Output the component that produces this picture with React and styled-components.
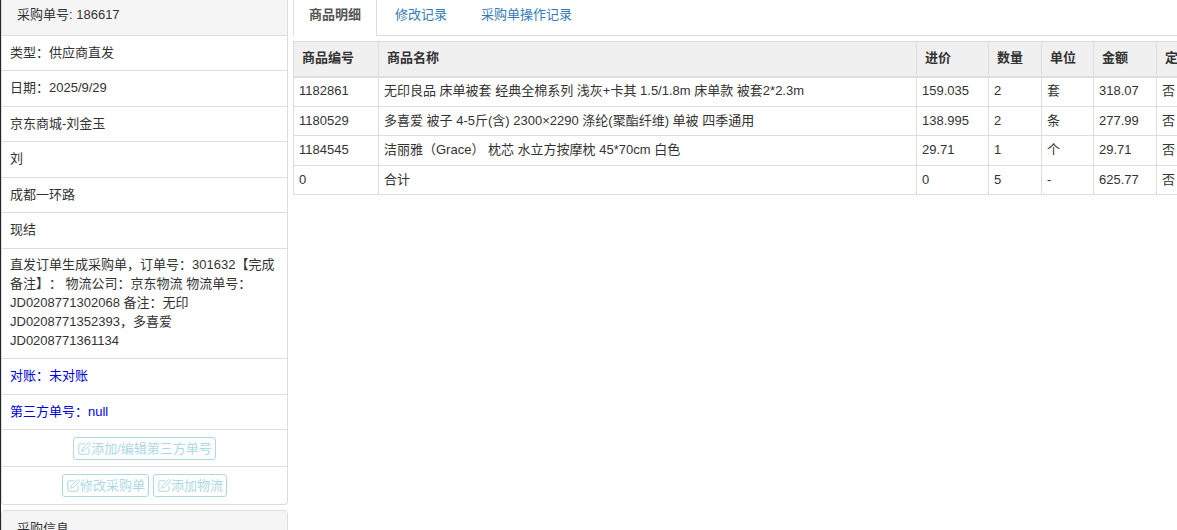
import React from 'react';
import styled, { createGlobalStyle } from 'styled-components';

const GlobalStyle = createGlobalStyle`
    * {
        box-sizing: border-box;
    }

    body {
        margin: 0;
        background: #fff;
        color: #333;
        font-family: "Liberation Sans", "Noto Sans CJK SC", sans-serif;
        font-size: 13px;
        line-height: 19px;
        text-spacing-trim: space-all;
        overflow: hidden;
    }
`;

const Page = styled.div`
    display: flex;
    align-items: stretch;
    min-height: 100vh;
    border-left: 1px solid #23262e;
`;

const Sidebar = styled.aside`
    flex: 0 0 287px;
    height: 100vh;
    overflow: hidden;
`;

const Panel = styled.section`
    margin-bottom: 5px;
    border: 1px solid #ddd;
    border-top-width: ${props => props.$cut ? '0' : '1px'};
    border-radius: ${props => props.$cut ? '0 0 4px 4px' : '4px'};
    overflow: hidden;
`;

const PanelHeading = styled.h3`
    margin: 0;
    padding: ${props => props.$cut ? '5px 15px 11px' : '8px 15px'};
    background: #f5f5f5;
    font-size: 13px;
    font-weight: normal;
`;

const List = styled.ul`
    margin: 0;
    padding: 0;
    list-style: none;
`;

const Item = styled.li`
    padding: 7px 8px 8px;
    border-top: 1px solid #ddd;
    color: ${props => props.$blue ? '#0000dc' : 'inherit'};

    &:nth-child(even) {
        padding-bottom: 9px;
    }
`;

const NoteItem = styled(Item)`
    padding: 6px 8px 8px;
`;

const ButtonItem = styled.li`
    display: flex;
    justify-content: center;
    gap: 4px;
    padding: 7px 8px 6px;
    border-top: 1px solid #ddd;

    &:last-child {
        padding-bottom: 7px;
    }
`;

const EditButton = styled.button`
    display: flex;
    align-items: center;
    height: 23px;
    padding: 0 3px 0 4px;
    border: 1px solid #add8e6;
    border-radius: 3px;
    background: #fff;
    color: #add8e6;
    font: inherit;
    cursor: pointer;
`;

const Main = styled.main`
    flex: 1;
    min-width: 0;
    padding-left: 5px;
    overflow: hidden;
`;

const Tabs = styled.nav`
    display: flex;
    gap: 2px;
    margin-bottom: 5px;
    border-bottom: 1px solid #ddd;
`;

const Tab = styled.a`
    margin-bottom: -1px;
    padding: 5px 15px 12px;
    border: solid ${props => props.$active ? '#ddd' : 'transparent'};
    border-width: 0 1px;
    background: ${props => props.$active ? '#fff' : 'transparent'};
    color: ${props => props.$active ? '#555' : '#337ab7'};
    font-weight: ${props => props.$active ? 'bold' : 'normal'};
    text-decoration: none;
`;

// runs a little past the right edge, the last column is cut by the window
const Table = styled.table`
    width: calc(100% + 9px);
    table-layout: fixed;
    border-collapse: collapse;
    white-space: nowrap;
`;

const Th = styled.th`
    width: ${props => props.$width || 'auto'};
    height: 35px;
    padding: 0 8px 2px;
    border: 1px solid #ddd;
    border-bottom-width: 2px;
    background: #f0f0f0;
    text-align: left;
`;

const Row = styled.tr`
    height: 29px;

    &:nth-child(odd) {
        height: 30px;
    }
`;

const Td = styled.td`
    padding: 0 5px 2px;
    border: 1px solid #ddd;
`;

const EditIcon = () => (
    <svg width="13" height="13" viewBox="0 0 13 13" fill="none" stroke="currentColor" aria-hidden="true">
        <path d="M7.2 1.8H2Q.8 1.8 .8 3V11Q.8 12.2 2 12.2H9.8Q11 12.2 11 11V6.5" />
        <path d="M3.6 9.4L4.6 6.6L10.5 .8Q11 .4 11.5 .8L12.3 1.6Q12.7 2 12.3 2.5L6.4 8.4Z" />
    </svg>
);

const columns = [
    { title: '商品编号', width: '85px' },
    { title: '商品名称' },
    { title: '进价', width: '72px' },
    { title: '数量', width: '53px' },
    { title: '单位', width: '52px' },
    { title: '金额', width: '63px' },
    { title: '定', width: '29px' },
];

const rows = [
    ['1182861', '无印良品 床单被套 经典全棉系列 浅灰+卡其 1.5/1.8m 床单款 被套2*2.3m', '159.035', '2', '套', '318.07', '否'],
    ['1180529', '多喜爱 被子 4-5斤(含) 2300×2290 涤纶(聚酯纤维) 单被 四季通用', '138.995', '2', '条', '277.99', '否'],
    ['1184545', '洁丽雅（Grace） 枕芯 水立方按摩枕 45*70cm 白色', '29.71', '1', '个', '29.71', '否'],
    ['0', '合计', '0', '5', '-', '625.77', '否'],
];

const OrderPanel = () => (
    <Panel $cut>
        <PanelHeading $cut>采购单号: 186617</PanelHeading>
        <List>
            <Item>类型：供应商直发</Item>
            <Item>日期：2025/9/29</Item>
            <Item>京东商城-刘金玉</Item>
            <Item>刘</Item>
            <Item>成都一环路</Item>
            <Item>现结</Item>
            <NoteItem>
                直发订单生成采购单，订单号：301632【完成备注】： 物流公司：京东物流 物流单号：JD0208771302068 备注：无印JD0208771352393，多喜爱JD0208771361134
            </NoteItem>
            <Item $blue>对账：未对账</Item>
            <Item $blue>第三方单号：null</Item>
            <ButtonItem>
                <EditButton type="button"><EditIcon />添加/编辑第三方单号</EditButton>
            </ButtonItem>
            <ButtonItem>
                <EditButton type="button"><EditIcon />修改采购单</EditButton>
                <EditButton type="button"><EditIcon />添加物流</EditButton>
            </ButtonItem>
        </List>
    </Panel>
);

export default class App extends React.Component {

    constructor(){
        super();
        this.state = { tab: 0 };
    }

    handleTab(e, tab){
        e.preventDefault();
        this.setState({ tab });
    }

    render() {
        return (
            <Page>
                <GlobalStyle />
                <Sidebar>
                    <OrderPanel />
                    <Panel>
                        <PanelHeading>采购信息</PanelHeading>
                    </Panel>
                </Sidebar>
                <Main>
                    <Tabs>
                        {['商品明细', '修改记录', '采购单操作记录'].map((label, i) => (
                            <Tab key={label} href="#" $active={this.state.tab === i} onClick={e => this.handleTab(e, i)}>
                                {label}
                            </Tab>
                        ))}
                    </Tabs>
                    <Table>
                        <thead>
                            <tr>
                                {columns.map(col => <Th key={col.title} $width={col.width}>{col.title}</Th>)}
                            </tr>
                        </thead>
                        <tbody>
                            {rows.map(row => (
                                <Row key={row[0]}>
                                    {row.map((cell, i) => <Td key={i}>{cell}</Td>)}
                                </Row>
                            ))}
                        </tbody>
                    </Table>
                </Main>
            </Page>
        );
    }

}
